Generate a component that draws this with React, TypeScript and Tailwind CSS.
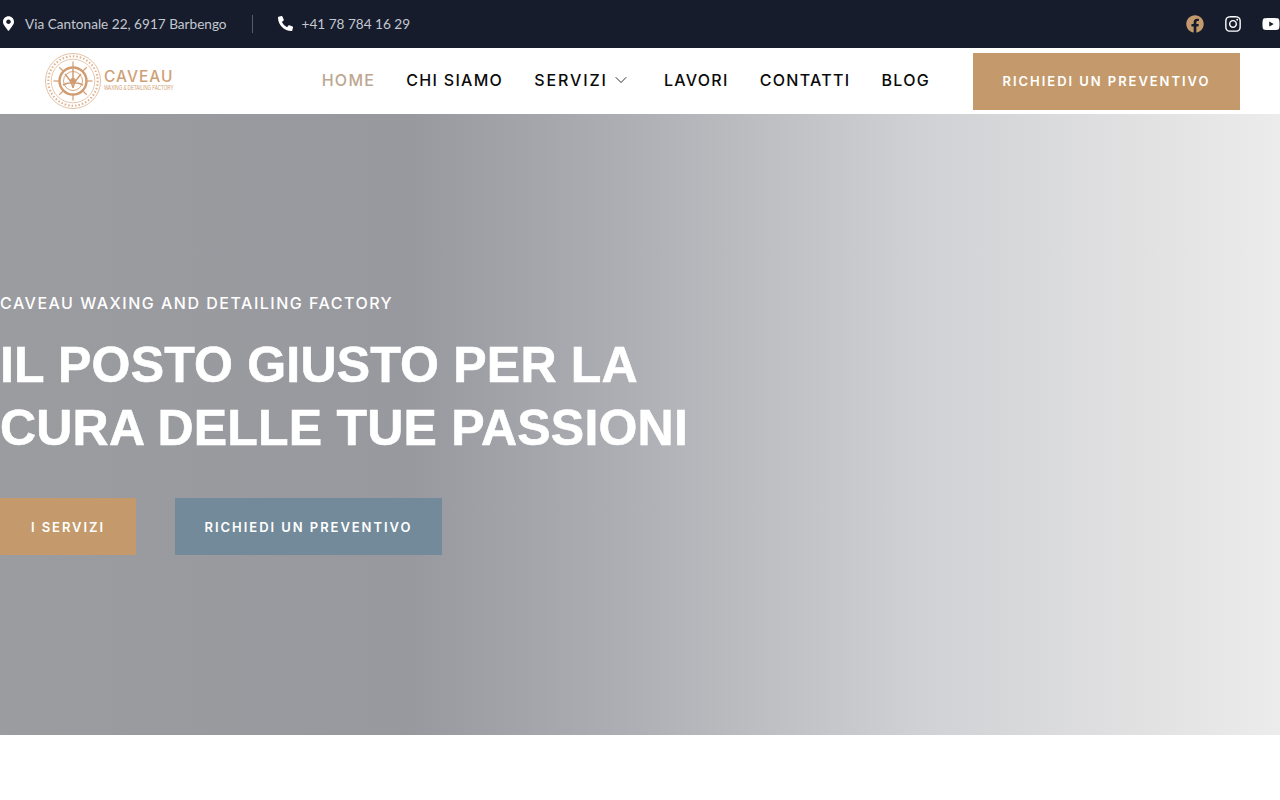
import { ChevronDown } from 'lucide-react';
import { FaFacebook, FaInstagram, FaYoutube, FaMapMarkerAlt, FaPhoneAlt } from 'react-icons/fa';

function Logo() {
  const spokes = [0, 45, 90, 135, 180, 225, 270, 315];
  return (
    <div className="flex items-center">
      <svg width="58" height="58" viewBox="0 0 58 58" fill="none" stroke="#dcb08c">
        <circle cx="29" cy="29" r="27.5" strokeWidth="0.8" />
        <circle cx="29" cy="29" r="24.7" strokeWidth="2" strokeDasharray="1.5 2" />
        <circle cx="29" cy="29" r="21.8" strokeWidth="0.7" />
        {spokes.map((a) => (
          <line key={a} x1="29" y1="9.5" x2="29" y2="15" strokeWidth="1.4" stroke="#d9a982" transform={`rotate(${a} 29 29)`} />
        ))}
        <circle cx="29" cy="29" r="13.5" strokeWidth="2.4" stroke="#d09c72" />
        <circle cx="29" cy="29" r="9.5" strokeWidth="0.9" stroke="#d09c72" />
        <path d="M19 33c5-3 15-3 20 0M21 22c4 5 7 8 8 14M37 22c-4 5-7 8-8 14M29 17v12" strokeWidth="1.5" stroke="#d09c72" />
        <circle cx="29" cy="29" r="3" fill="#d09c72" stroke="none" />
      </svg>
      <div className="ml-[2px] flex w-[70px] flex-col whitespace-nowrap text-[#cf9f78]">
        <span className="text-[15.5px] font-medium leading-[13px] tracking-[1px]">CAVEAU</span>
        <span className="origin-left scale-x-[0.66] font-['Liberation_Sans',sans-serif] text-[7px] leading-[9px] tracking-[-0.1px]">WAXING &amp; DETAILING FACTORY</span>
      </div>
    </div>
  );
}

export default function App() {
  return (
    <div className="min-h-[800px] bg-white font-['Inter',sans-serif]">
      {/* Top bar */}
      <div className="flex h-12 items-center justify-between bg-[#161c2c] pl-[3px] text-[#c3c8d1]">
        <div className="flex items-center font-['Lato',sans-serif] text-[13.6px]">
          <FaMapMarkerAlt className="h-[15px] w-[11px] text-white" />
          <span className="ml-[11px]">Via Cantonale 22, 6917 Barbengo</span>
          <span className="ml-[25px] h-[18px] w-px bg-[#565c6a]" />
          <FaPhoneAlt className="ml-[25px] h-[15px] w-[15px] text-white" />
          <span className="ml-[9px]">+41 78 784 16 29</span>
        </div>
        <div className="flex items-center gap-[20px] overflow-hidden">
          <FaFacebook className="h-[18px] w-[18px] text-[#c49a6c]" />
          <FaInstagram className="h-[18px] w-[18px] text-white" />
          <FaYoutube className="h-[18px] w-[18px] text-white" />
        </div>
      </div>

      {/* Nav */}
      <header className="flex h-[66px] items-center justify-between pl-[44px] pr-10">
        <Logo />
        <div className="flex items-center">
          <nav className="mb-[2px] flex items-center gap-[31px] text-[16px] font-medium tracking-[1.3px] text-[#0a0a0a]">
            <a className="text-[#bda78f]">HOME</a>
            <a>CHI SIAMO</a>
            <a className="flex items-center gap-[3px] tracking-[1.9px]">
              SERVIZI <ChevronDown className="h-5 w-5" strokeWidth={1} />
            </a>
            <a className="ml-[2px]">LAVORI</a>
            <a>CONTATTI</a>
            <a>BLOG</a>
          </nav>
          <a className="ml-[43px] flex h-[57px] w-[267px] items-center justify-center bg-[#c49a6c] pt-[2px] text-[13px] font-semibold tracking-[1.95px] text-white">
            RICHIEDI UN PREVENTIVO
          </a>
        </div>
      </header>

      {/* Hero */}
      <section className="flex h-[621px] flex-col justify-center bg-[linear-gradient(90deg,#9b9ca0_0%,#98999e_32%,#afb0b5_50%,#d0d1d4_72%,#e2e2e3_90%,#ececec_100%)] pb-[3px] text-white">
        <p className="text-[16px] font-medium leading-6 tracking-[1.5px]">CAVEAU WAXING AND DETAILING FACTORY</p>
        <h1 className="mt-[19px] font-['Liberation_Sans',sans-serif] text-[50px] font-bold leading-[63px] tracking-[0.2px] [-webkit-text-stroke:0.6px_white]">
          IL POSTO GIUSTO PER LA
          <br />
          CURA DELLE TUE PASSIONI
        </h1>
        <div className="mt-[38px] flex gap-[39px] text-[13px] font-semibold tracking-[1.95px]">
          <a className="flex h-[57px] w-[136px] items-center justify-center bg-[#c49a6c] pt-[2px]">I SERVIZI</a>
          <a className="flex h-[57px] w-[267px] items-center justify-center bg-[#728a9a] pt-[2px]">RICHIEDI UN PREVENTIVO</a>
        </div>
      </section>
    </div>
  );
}
